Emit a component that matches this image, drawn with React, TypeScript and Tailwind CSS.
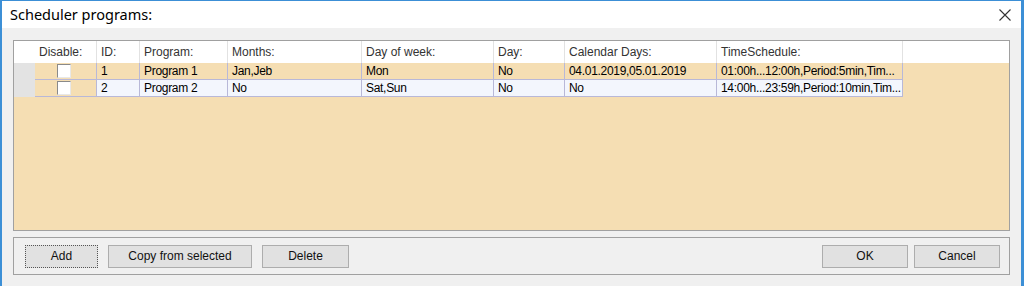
const cols = [
  { key: "dis", title: "Disable:", w: 62 },
  { key: "id", title: "ID:", w: 43 },
  { key: "prog", title: "Program:", w: 88 },
  { key: "months", title: "Months:", w: 134 },
  { key: "dow", title: "Day of week:", w: 132 },
  { key: "day", title: "Day:", w: 71 },
  { key: "cal", title: "Calendar Days:", w: 152 },
  { key: "time", title: "TimeSchedule:", w: 186 },
];

const rows = [
  ["1", "Program 1", "Jan,Jeb", "Mon", "No", "04.01.2019,05.01.2019", "01:00h...12:00h,Period:5min,Tim..."],
  ["2", "Program 2", "No", "Sat,Sun", "No", "No", "14:00h...23:59h,Period:10min,Tim..."],
];

function CheckBox() {
  return <div className="w-[14px] h-[14px] bg-white border-l border-t border-l-[#8a8a8a] border-t-[#8a8a8a] border-r border-b border-r-[#e8e8e8] border-b-[#e8e8e8]" />;
}

function Btn(props: { label: string; w: string; focus?: boolean }) {
  return (
    <div
      className={
        "h-[23px] flex items-center justify-center bg-[#e1e1e1] text-[12px] text-[#111] " +
        props.w +
        (props.focus ? " border border-dotted border-[#555]" : " border border-[#adadad]")
      }
    >
      {props.label}
    </div>
  );
}

export default function App() {
  return (
    <div
      className="w-[1024px] h-[286px] bg-[#f0f0f0] border-t border-l-2 border-r-[3px] border-[#3c8fd6] flex flex-col overflow-hidden"
      style={{ fontFamily: '"Liberation Sans", Arial, sans-serif' }}
    >
      <div className="h-[27px] bg-white flex items-center justify-between pl-[8px] pr-[10px] shrink-0">
        <span className="text-[14.5px] text-black" style={{ fontFamily: '"Noto Sans", sans-serif' }}>
          Scheduler programs:
        </span>
        <svg width="12" height="12" viewBox="0 0 12 12">
          <path d="M0.5 0.5 L11.5 11.5 M11.5 0.5 L0.5 11.5" stroke="#333" strokeWidth="1.1" />
        </svg>
      </div>
      <div className="flex flex-col pt-[12px] pl-[11px] pr-[11px]">
        <div className="h-[191px] border border-[#a0a0a0] bg-[#f5deb3] flex flex-col">
          <div className="h-[22px] bg-white flex text-[12px] text-[#333]">
            <div className="w-[21px]" />
            {cols.map((c) => (
              <div
                key={c.key}
                className="h-full flex items-center border-r border-[#e2e2e2] pl-[4px]"
                style={{ width: c.w }}
              >
                {c.title}
              </div>
            ))}
          </div>
          {rows.map((r, i) => (
            <div key={i} className="h-[17px] flex text-[12px] text-black tracking-[-0.3px]">
              <div className="w-[21px] bg-[#e3e3e3]" />
              <div className="h-full w-[62px] flex justify-center items-center border-b border-r border-[#b8b8d8] pr-[4px]">
                <CheckBox />
              </div>
              {r.map((v, j) => (
                <div
                  key={j}
                  className={
                    "h-full flex items-center pl-[4px] border-b border-r border-[#b8b8d8] whitespace-nowrap overflow-hidden " +
                    (i === 1 ? "bg-[#f3f6fd]" : "")
                  }
                  style={{ width: cols[j + 1].w }}
                >
                  {v}
                </div>
              ))}
            </div>
          ))}
        </div>
        <div className="mt-[6px] h-[38px] border border-[#a0a0a0] flex items-center justify-between pl-[11px] pr-[9px]">
          <div className="flex gap-[10px]">
            <Btn label="Add" w="w-[73px]" focus />
            <Btn label="Copy from selected" w="w-[144px]" />
            <Btn label="Delete" w="w-[87px]" />
          </div>
          <div className="flex gap-[6px]">
            <Btn label="OK" w="w-[86px]" />
            <Btn label="Cancel" w="w-[86px]" />
          </div>
        </div>
      </div>
    </div>
  );
}
